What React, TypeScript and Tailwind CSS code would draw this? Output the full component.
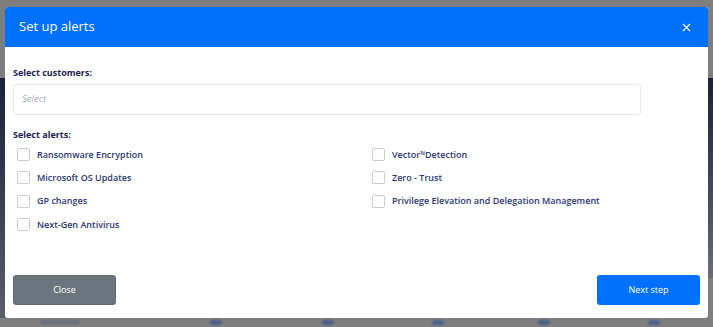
import { X } from "lucide-react";

const leftAlerts = ["Ransomware Encryption", "Microsoft OS Updates", "GP changes", "Next-Gen Antivirus"];

function Checkbox() {
  return <span className="h-[13px] w-[13px] shrink-0 rounded-[2px] border border-[#c9ccd3] bg-white" />;
}

function AlertRow({ children }: { children: React.ReactNode }) {
  return (
    <label className="flex h-[23.3px] items-center gap-[7px] pl-[4px]">
      <Checkbox />
      <span className="text-[9px] font-semibold leading-[12px] text-[#2a3774]">{children}</span>
    </label>
  );
}

export default function App() {
  return (
    <div className="relative h-[327px] w-[713px] overflow-hidden bg-[#7e7e7e] font-['Open_Sans',sans-serif]">
      {/* dimmed page behind the modal */}
      <div className="absolute left-0 top-[78px] h-[240px] w-[5px] bg-gradient-to-b from-[#1b2238] to-[#5b5f6b]" />
      <div className="absolute right-0 top-[78px] h-[200px] w-[5px] bg-gradient-to-b from-[#1b2238] to-[#6a6d76]" />
      <div className="absolute left-[40px] top-[320px] h-[4px] w-[40px] rounded-full bg-[#6a6e7a] blur-[1.5px]" />
      <div className="absolute left-[210px] top-[320px] h-[5px] w-[12px] rounded-full bg-[#4c6189] blur-[1px]" />
      <div className="absolute left-[322px] top-[320px] h-[5px] w-[12px] rounded-full bg-[#4c6189] blur-[1px]" />
      <div className="absolute left-[432px] top-[320px] h-[5px] w-[12px] rounded-full bg-[#4c6189] blur-[1px]" />
      <div className="absolute left-[538px] top-[320px] h-[5px] w-[12px] rounded-full bg-[#4c6189] blur-[1px]" />
      <div className="absolute left-[648px] top-[320px] h-[5px] w-[12px] rounded-full bg-[#4c6189] blur-[1px]" />

      <div className="absolute left-[5px] top-[7px] flex h-[311px] w-[703px] flex-col overflow-hidden rounded-[3px] bg-white">
        <div className="flex h-[40px] shrink-0 items-center justify-between bg-[#0070ff] pl-[14px] pr-[15px]">
          <span className="text-[13px] text-white">Set up alerts</span>
          <X className="h-[13px] w-[13px] text-white" strokeWidth={2} />
        </div>

        <div className="flex flex-1 flex-col px-[8px] pt-[20px]">
          <div className="text-[9px] font-bold leading-[12px] text-[#1c2350]">Select customers:</div>
          <div className="mt-[5px] flex h-[31px] w-[628px] items-center rounded-[3px] border border-[#e6e7ea] pl-[8px]">
            <span className="text-[9.5px] italic text-[#a9adb5]">Select</span>
          </div>

          <div className="mt-[14px] text-[9px] font-bold leading-[12px] text-[#1c2350]">Select alerts:</div>
          <div className="mt-[2px] grid grid-cols-[355px_1fr]">
            <div className="flex flex-col">
              {leftAlerts.map((a) => (
                <AlertRow key={a}>{a}</AlertRow>
              ))}
            </div>
            <div className="flex flex-col">
              <AlertRow>
                Vector<sup className="text-[6px]">N</sup>Detection
              </AlertRow>
              <AlertRow>Zero - Trust</AlertRow>
              <AlertRow>Privilege Elevation and Delegation Management</AlertRow>
            </div>
          </div>

          <div className="mt-auto mb-[13px] flex justify-between">
            <button className="h-[30px] w-[103px] rounded-[3px] border border-[#5f6770] bg-[#6c757d] text-[9px] text-white">
              Close
            </button>
            <button className="h-[30px] w-[103px] rounded-[3px] bg-[#0070ff] text-[9px] text-white">
              Next step
            </button>
          </div>
        </div>
      </div>
    </div>
  );
}
